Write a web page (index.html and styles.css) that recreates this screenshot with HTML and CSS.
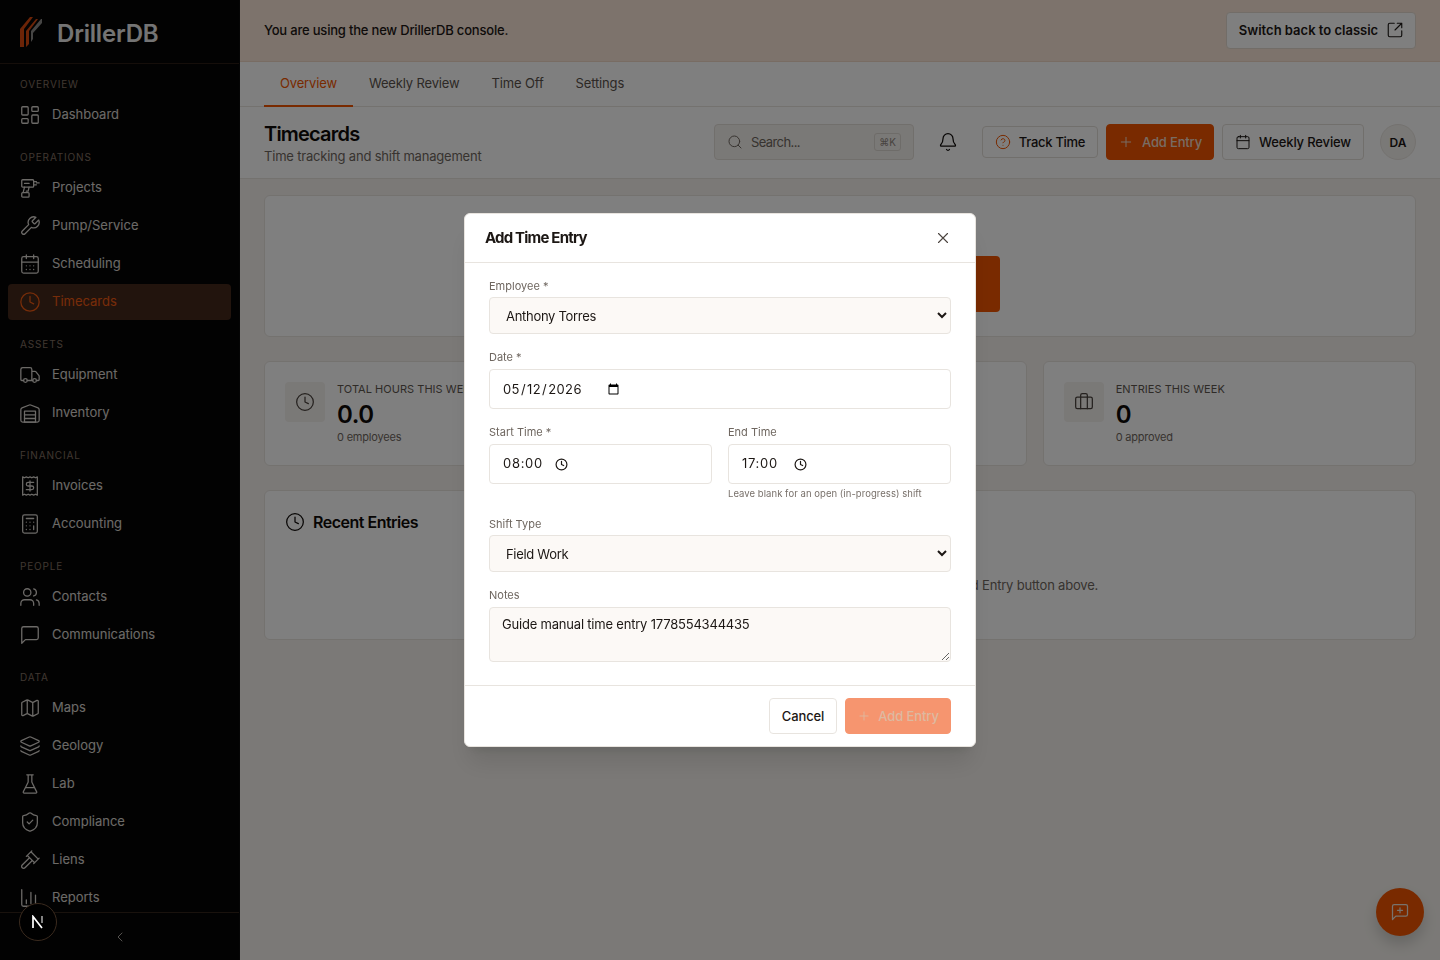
FILE: index.html
```html
<!DOCTYPE html>
<html lang="en-GB">
<head>
<meta charset="utf-8">
<title>DrillerDB – Timecards</title>
<link rel="stylesheet" href="styles.css">
</head>
<body>
<svg class="defs" width="0" height="0" aria-hidden="true">
  <symbol id="i-dash" viewBox="0 0 24 24"><rect x="3" y="3" width="7" height="9" rx="1"/><rect x="14" y="3" width="7" height="5" rx="1"/><rect x="14" y="12" width="7" height="9" rx="1"/><rect x="3" y="16" width="7" height="5" rx="1"/></symbol>
  <symbol id="i-drill" viewBox="0 0 24 24"><path d="M4 3h11a1 1 0 0 1 1 1v6a1 1 0 0 1-1 1H4a1 1 0 0 1-1-1V4a1 1 0 0 1 1-1z"/><path d="M16 5h3M19 6.500h3M16 8.500h3"/><path d="M6 11l-1.500 6M11 11l-1 4.500H8M6 7h5"/><path d="M4 17h6a1 1 0 0 1 1 1v3a1 1 0 0 1-1 1H4a1 1 0 0 1-1-1v-3a1 1 0 0 1 1-1z"/></symbol>
  <symbol id="i-wrench" viewBox="0 0 24 24"><path d="M14.7 6.300a1 1 0 0 0 0 1.400l1.600 1.600a1 1 0 0 0 1.400 0l3.770-3.770a6 6 0 0 1-7.940 7.940l-6.910 6.910a2.120 2.120 0 0 1-3-3l6.910-6.910a6 6 0 0 1 7.940-7.940l-3.760 3.760z"/></symbol>
  <symbol id="i-cal-days" viewBox="0 0 24 24"><path d="M8 2v4M16 2v4"/><rect x="3" y="4" width="18" height="18" rx="2"/><path d="M3 10h18M8 14h.01M12 14h.01M16 14h.01M8 18h.01M12 18h.01M16 18h.01"/></symbol>
  <symbol id="i-clock" viewBox="0 0 24 24"><circle cx="12" cy="12" r="10"/><path d="M12 6v6l4 2"/></symbol>
  <symbol id="i-truck" viewBox="0 0 24 24"><path d="M14 18V6a2 2 0 0 0-2-2H4a2 2 0 0 0-2 2v11a1 1 0 0 0 1 1h2M15 18H9M19 18h2a1 1 0 0 0 1-1v-3.650a1 1 0 0 0-.22-.624l-3.480-4.350A1 1 0 0 0 17.520 8H14"/><circle cx="17" cy="18" r="2"/><circle cx="7" cy="18" r="2"/></symbol>
  <symbol id="i-warehouse" viewBox="0 0 24 24"><path d="M22 8.350V20a2 2 0 0 1-2 2H4a2 2 0 0 1-2-2V8.350A2 2 0 0 1 3.260 6.500l8-3.200a2 2 0 0 1 1.480 0l8 3.200A2 2 0 0 1 22 8.350Z"/><path d="M6 18h12M6 14h12"/><rect x="6" y="10" width="12" height="12"/></symbol>
  <symbol id="i-receipt" viewBox="0 0 24 24"><path d="M4 2v20l2-1 2 1 2-1 2 1 2-1 2 1 2-1 2 1V2l-2 1-2-1-2 1-2-1-2 1-2-1-2 1Z"/><path d="M16 8h-6a2 2 0 1 0 0 4h4a2 2 0 1 1 0 4H8M12 17.500v-11"/></symbol>
  <symbol id="i-calc" viewBox="0 0 24 24"><rect x="4" y="2" width="16" height="20" rx="2"/><path d="M8 6h8M16 14v4M16 10h.01M12 10h.01M8 10h.01M12 14h.01M8 14h.01M12 18h.01M8 18h.01"/></symbol>
  <symbol id="i-users" viewBox="0 0 24 24"><path d="M16 21v-2a4 4 0 0 0-4-4H6a4 4 0 0 0-4 4v2"/><circle cx="9" cy="7" r="4"/><path d="M22 21v-2a4 4 0 0 0-3-3.870M16 3.130a4 4 0 0 1 0 7.750"/></symbol>
  <symbol id="i-msg" viewBox="0 0 24 24"><path d="M21 15a2 2 0 0 1-2 2H7l-4 4V5a2 2 0 0 1 2-2h14a2 2 0 0 1 2 2z"/></symbol>
  <symbol id="i-map" viewBox="0 0 24 24"><path d="M14.106 5.553a2 2 0 0 0 1.788 0l3.659-1.830A1 1 0 0 1 21 4.619v12.764a1 1 0 0 1-.553.894l-4.553 2.277a2 2 0 0 1-1.788 0l-4.212-2.106a2 2 0 0 0-1.788 0l-3.659 1.830A1 1 0 0 1 3 19.381V6.618a1 1 0 0 1 .553-.894l4.553-2.277a2 2 0 0 1 1.788 0zM15 5.764v15M9 3.236v15"/></symbol>
  <symbol id="i-layers" viewBox="0 0 24 24"><path d="M12.830 2.180a2 2 0 0 0-1.660 0L2.600 6.080a1 1 0 0 0 0 1.830l8.580 3.910a2 2 0 0 0 1.660 0l8.580-3.900a1 1 0 0 0 0-1.830Z"/><path d="M2 12a1 1 0 0 0 .58.910l8.600 3.910a2 2 0 0 0 1.650 0l8.580-3.900A1 1 0 0 0 22 12"/><path d="M2 17a1 1 0 0 0 .58.910l8.600 3.910a2 2 0 0 0 1.650 0l8.580-3.900A1 1 0 0 0 22 17"/></symbol>
  <symbol id="i-flask" viewBox="0 0 24 24"><path d="M10 2v7.527a2 2 0 0 1-.211.896L4.720 20.550a1 1 0 0 0 .9 1.450h12.760a1 1 0 0 0 .9-1.450l-5.069-10.127A2 2 0 0 1 14 9.527V2M8.500 2h7M7 16h10"/></symbol>
  <symbol id="i-shield" viewBox="0 0 24 24"><path d="M20 13c0 5-3.500 7.500-7.660 8.950a1 1 0 0 1-.67-.01C7.500 20.500 4 18 4 13V6a1 1 0 0 1 1-1c2 0 4.500-1.200 6.240-2.720a1.170 1.170 0 0 1 1.520 0C14.510 3.810 17 5 19 5a1 1 0 0 1 1 1z"/><path d="m9 12 2 2 4-4"/></symbol>
  <symbol id="i-gavel" viewBox="0 0 24 24"><path d="m14.500 12.500-8 8a2.119 2.119 0 1 1-3-3l8-8M16 16l6-6M8 8l6-6M9 7l8 8M21 11l-8-8"/></symbol>
  <symbol id="i-chart" viewBox="0 0 24 24"><path d="M3 3v16a2 2 0 0 0 2 2h16M8 18v-4M13 18V6M18 18V9"/></symbol>
  <symbol id="i-chev" viewBox="0 0 24 24"><path d="m15 18-6-6 6-6"/></symbol>
  <symbol id="i-ext" viewBox="0 0 24 24"><path d="M21 13v6a2 2 0 0 1-2 2H5a2 2 0 0 1-2-2V5a2 2 0 0 1 2-2h6M21 3l-9 9M15 3h6v6"/></symbol>
  <symbol id="i-search" viewBox="0 0 24 24"><path d="m21 21-4.300-4.300"/><circle cx="11" cy="11" r="8"/></symbol>
  <symbol id="i-bell" viewBox="0 0 24 24"><path d="M10.268 21a2 2 0 0 0 3.464 0M3.262 15.326A1 1 0 0 0 4 17h16a1 1 0 0 0 .74-1.673C19.410 13.956 18 12.499 18 8A6 6 0 0 0 6 8c0 4.499-1.411 5.956-2.738 7.326"/></symbol>
  <symbol id="i-help" viewBox="0 0 24 24"><circle cx="12" cy="12" r="10"/><path d="M9.090 9a3 3 0 0 1 5.830 1c0 2-3 3-3 3M12 17h.01"/></symbol>
  <symbol id="i-plus" viewBox="0 0 24 24"><path d="M5 12h14M12 5v14"/></symbol>
  <symbol id="i-cal" viewBox="0 0 24 24"><path d="M8 2v4M16 2v4"/><rect x="3" y="4" width="18" height="18" rx="2"/><path d="M3 10h18"/></symbol>
  <symbol id="i-brief" viewBox="0 0 24 24"><path d="M16 20V4a2 2 0 0 0-2-2h-4a2 2 0 0 0-2 2v16"/><rect x="2" y="6" width="20" height="14" rx="2"/></symbol>
  <symbol id="i-x" viewBox="0 0 24 24"><path d="M18 6 6 18M6 6l12 12"/></symbol>
  <symbol id="i-msg-plus" viewBox="0 0 24 24"><path d="M21 15a2 2 0 0 1-2 2H7l-4 4V5a2 2 0 0 1 2-2h14a2 2 0 0 1 2 2z"/><path d="M12 7v6M9 10h6"/></symbol>
</svg>

<div class="app">
  <aside class="sidebar">
    <div class="brand">
      <svg class="brand-mark" viewBox="0 0 22 30" aria-hidden="true">
        <path class="mark-o" d="M0 12 10 0h3L4 12v18H0z"/>
        <path class="mark-o" d="M6 14 16 2h2L9 14v13l-3 3z"/>
        <path class="mark-g" d="M11 14 21 2h1v4l-9 10v6l-2 3z"/>
      </svg>
      <span class="brand-name">DrillerDB</span>
    </div>
    <nav class="nav">
      <div class="nav-label">Overview</div>
      <a class="nav-item"><svg class="nav-ico"><use href="#i-dash"/></svg>Dashboard</a>
      <div class="nav-label">Operations</div>
      <a class="nav-item"><svg class="nav-ico"><use href="#i-drill"/></svg>Projects</a>
      <a class="nav-item"><svg class="nav-ico"><use href="#i-wrench"/></svg>Pump/Service</a>
      <a class="nav-item"><svg class="nav-ico"><use href="#i-cal-days"/></svg>Scheduling</a>
      <a class="nav-item active"><svg class="nav-ico"><use href="#i-clock"/></svg>Timecards</a>
      <div class="nav-label">Assets</div>
      <a class="nav-item"><svg class="nav-ico"><use href="#i-truck"/></svg>Equipment</a>
      <a class="nav-item"><svg class="nav-ico"><use href="#i-warehouse"/></svg>Inventory</a>
      <div class="nav-label">Financial</div>
      <a class="nav-item"><svg class="nav-ico"><use href="#i-receipt"/></svg>Invoices</a>
      <a class="nav-item"><svg class="nav-ico"><use href="#i-calc"/></svg>Accounting</a>
      <div class="nav-label">People</div>
      <a class="nav-item"><svg class="nav-ico"><use href="#i-users"/></svg>Contacts</a>
      <a class="nav-item"><svg class="nav-ico"><use href="#i-msg"/></svg>Communications</a>
      <div class="nav-label">Data</div>
      <a class="nav-item"><svg class="nav-ico"><use href="#i-map"/></svg>Maps</a>
      <a class="nav-item"><svg class="nav-ico"><use href="#i-layers"/></svg>Geology</a>
      <a class="nav-item"><svg class="nav-ico"><use href="#i-flask"/></svg>Lab</a>
      <a class="nav-item"><svg class="nav-ico"><use href="#i-shield"/></svg>Compliance</a>
      <a class="nav-item"><svg class="nav-ico"><use href="#i-gavel"/></svg>Liens</a>
      <a class="nav-item"><svg class="nav-ico"><use href="#i-chart"/></svg>Reports</a>
    </nav>
    <div class="side-foot"><svg class="ico16"><use href="#i-chev"/></svg></div>
  </aside>

  <main class="main">
    <div class="banner">
      <span>You are using the new DrillerDB console.</span>
      <button class="btn-switch">Switch back to classic <svg class="ico18"><use href="#i-ext"/></svg></button>
    </div>
    <div class="tabs">
      <a class="tab on">Overview</a>
      <a class="tab">Weekly Review</a>
      <a class="tab">Time Off</a>
      <a class="tab">Settings</a>
    </div>
    <header class="page-head">
      <div class="titles">
        <h1>Timecards</h1>
        <p>Time tracking and shift management</p>
      </div>
      <div class="actions">
        <div class="search"><svg class="ico16"><use href="#i-search"/></svg><span class="search-text">Search...</span><kbd>⌘K</kbd></div>
        <button class="bell"><svg class="ico20"><use href="#i-bell"/></svg></button>
        <button class="btn btn-track"><svg class="ico16 orange"><use href="#i-help"/></svg>Track Time</button>
        <button class="btn btn-primary"><svg class="ico16"><use href="#i-plus"/></svg>Add Entry</button>
        <button class="btn btn-weekly"><svg class="ico16"><use href="#i-cal"/></svg>Weekly Review</button>
        <div class="avatar">DA</div>
      </div>
    </header>
    <div class="content">
      <section class="card hero"><div class="hero-btn"></div></section>
      <div class="stats">
        <section class="card stat">
          <div class="stat-ico"><svg class="ico20"><use href="#i-clock"/></svg></div>
          <div><div class="stat-label">Total hours this week</div><div class="stat-value">0.0</div><div class="stat-sub">0 employees</div></div>
        </section>
        <section class="card stat">
          <div class="stat-ico"><svg class="ico20"><use href="#i-clock"/></svg></div>
          <div><div class="stat-label">Overtime this week</div><div class="stat-value">0.0</div><div class="stat-sub">0 hours</div></div>
        </section>
        <section class="card stat">
          <div class="stat-ico"><svg class="ico20"><use href="#i-brief"/></svg></div>
          <div><div class="stat-label">Entries this week</div><div class="stat-value">0</div><div class="stat-sub">0 approved</div></div>
        </section>
      </div>
      <section class="card recent">
        <h2><svg class="ico20"><use href="#i-clock"/></svg>Recent Entries</h2>
        <p class="empty">No time entries yet. Start tracking time or log an entry with the Add Entry button above.</p>
      </section>
    </div>
  </main>
</div>

<button class="fab"><svg class="ico20"><use href="#i-msg-plus"/></svg></button>

<div class="overlay">
  <form class="modal">
    <div class="modal-head">
      <h3>Add Time Entry</h3>
      <svg class="ico18 close"><use href="#i-x"/></svg>
    </div>
    <div class="modal-body">
      <div class="field">
        <label>Employee *</label>
        <select class="select"><option>Anthony Torres</option></select>
      </div>
      <div class="field">
        <label>Date *</label>
        <input class="input date" type="date" value="2026-05-12">
      </div>
      <div class="row">
        <div>
          <label>Start Time *</label>
          <div class="input time"><input class="time-val" type="text" value="08:00"><svg class="time-ico"><use href="#i-clock"/></svg></div>
        </div>
        <div>
          <label>End Time</label>
          <div class="input time"><input class="time-val" type="text" value="17:00"><svg class="time-ico"><use href="#i-clock"/></svg></div>
          <div class="hint">Leave blank for an open (in-progress) shift</div>
        </div>
      </div>
      <div class="field">
        <label>Shift Type</label>
        <select class="select"><option>Field Work</option></select>
      </div>
      <div>
        <label>Notes</label>
        <textarea class="area">Guide manual time entry 1778554344435</textarea>
      </div>
    </div>
    <div class="modal-foot">
      <button type="button" class="m-btn m-cancel">Cancel</button>
      <button type="button" class="m-btn m-add"><svg class="ico14"><use href="#i-plus"/></svg>Add Entry</button>
    </div>
  </form>
</div>

<div class="dev-badge" aria-label="Next.js">
  <svg class="n-logo" viewBox="0 0 14 14"><path d="M2 13V1.500L11 13"/><path class="n-right" d="M11 1v7"/></svg>
</div>
</body>
</html>
```
FILE: styles.css
```css
* { box-sizing: border-box; }
html, body { height: 100%; }
body {
  margin: 0;
  overflow: hidden;
  font-family: Inter, "Liberation Sans", sans-serif;
  font-size: 13px;
  color: #1c1714;
  background: #f6f3ee;
}
.defs { position: absolute; }
svg { fill: none; stroke: currentColor; stroke-width: 1.5; stroke-linecap: round; stroke-linejoin: round; flex: none; }
.ico20 { width: 20px; height: 20px; }
.ico18 { width: 18px; height: 18px; }
.ico16 { width: 16px; height: 16px; }
.ico14 { width: 14px; height: 14px; }
.orange { color: #f25500; }

.app { display: flex; height: 960px; }

/* sidebar */
.sidebar { width: 240px; flex: none; height: 960px; background: #050505; border-right: 1px solid #0a0a0a; display: flex; flex-direction: column; }
.brand { height: 64px; flex: none; display: flex; align-items: center; gap: 14px; padding: 3px 0 0 20px; border-bottom: 1px solid #2a1d15; }
.brand-mark { width: 22px; height: 30px; margin-top: -3px; stroke: none; }
.mark-o { fill: #d9480f; }
.mark-g { fill: #8d8a88; }
.brand-name { font-size: 24px; font-weight: 600; color: #e9e9e9; letter-spacing: -0.2px; margin-left: 1px; }
.nav { flex: 1; min-height: 0; overflow: hidden; padding: 12px 8px 0; display: flex; flex-direction: column; }
.nav-label { height: 16px; line-height: 16px; margin: 0 0 5px; padding-left: 12px; font-size: 10px; letter-spacing: .85px; text-transform: uppercase; color: #806f62; }
.nav-item + .nav-label { margin-top: 16px; }
.nav-item { height: 36px; flex: none; display: flex; align-items: center; gap: 11px; padding: 0 0 2px 11px; border-radius: 4px; color: #f0ebe5; font-size: 13px; opacity: .9; }
.nav-item + .nav-item { margin-top: 2px; }
.nav-ico { width: 22px; height: 22px; margin-top: 2px; stroke-width: 1.4; color: #f0ebe5; }
.nav-item.active { background: #44281a; color: #ef5a12; opacity: 1; }
.nav-item.active .nav-ico { color: #ef5a12; }
.side-foot { height: 48px; flex: none; border-top: 1px solid #33241a; display: flex; align-items: center; justify-content: center; color: #aaa49f; }

/* main */
.main { flex: 1; min-width: 0; display: flex; flex-direction: column; }
.banner { height: 62px; flex: none; display: flex; align-items: center; justify-content: space-between; padding: 0 24px 1px; background: #fae6d8; border-bottom: 1px solid #f0d8c6; font-size: 13px; font-weight: 500; letter-spacing: -0.2px; }
.btn-switch { height: 37px; width: 190px; display: flex; align-items: center; justify-content: center; gap: 8px; font: 600 13px Inter, sans-serif; color: #1c1714; background: #fff; border: 1px solid #e5dbd0; border-radius: 4px; padding: 0 0 0 1px; }
.tabs { height: 45px; flex: none; display: flex; padding-left: 24px; background: #fff; border-bottom: 1px solid #e8e4df; }
.tab { display: flex; align-items: center; padding: 0 16px 1px; margin-bottom: -1px; font-size: 13px; letter-spacing: -0.15px; color: #5a524c; border-bottom: 2px solid transparent; }
.tab.on { color: #f25500; border-bottom-color: #f25500; }
.page-head { height: 72px; flex: none; display: flex; align-items: center; justify-content: space-between; padding: 0 24px; background: #fff; border-bottom: 1px solid #e8e4df; }
.titles h1 { margin: 1px 0 0; font-size: 20px; line-height: 24px; font-weight: 600; letter-spacing: -0.8px; color: #0f0b09; }
.titles p { margin: 1px 0 0; font-size: 13px; line-height: 18px; letter-spacing: -0.2px; color: #6f6760; }
.actions { display: flex; align-items: center; margin-top: -1px; }
.search { width: 200px; height: 36px; display: flex; align-items: center; gap: 8px; padding: 0 12px; background: #f5f2ee; border: 1px solid #e3ded8; border-radius: 4px; color: #6f6760; }
.search-text { flex: 1; font-size: 13px; letter-spacing: -0.6px; }
.search kbd { font: 10px Inter, sans-serif; width: 27px; height: 18px; display: flex; align-items: center; justify-content: center; border: 1px solid #ddd8d2; border-radius: 3px; color: #8f8780; }
.bell { width: 20px; height: 36px; margin: 0 24px; padding: 0; display: flex; align-items: center; background: none; border: 0; color: #0f0b09; }
.btn { height: 36px; display: flex; align-items: center; justify-content: center; gap: 8px; padding: 0; margin-right: 8px; font: 500 13px Inter, sans-serif; letter-spacing: -0.15px; color: #1c1714; background: #fff; border: 1px solid #e3ded8; border-radius: 4px; }
.btn-track { width: 116px; height: 32px; letter-spacing: -0.3px; }
.btn-primary { width: 108px; background: #f25500; border-color: #f25500; color: #f0d9c8; }
.btn-weekly { width: 142px; }
.avatar { width: 36px; height: 36px; margin-left: 8px; display: flex; align-items: center; justify-content: center; border-radius: 50%; background: #f5f2ee; border: 1px solid #e8e4df; font-size: 12px; font-weight: 600; }
.content { flex: 1; padding: 16px 24px; display: flex; flex-direction: column; gap: 24px; }
.card { background: #fff; border: 1px solid #e8e4df; border-radius: 6px; }
.hero { height: 142px; display: flex; align-items: flex-end; justify-content: center; padding-bottom: 24px; }
.hero-btn { width: 320px; height: 56px; background: #f25500; border-radius: 4px; }
.stats { display: grid; grid-template-columns: repeat(3, 1fr); gap: 16px; }
.stat { height: 105px; display: flex; gap: 12px; padding: 20px; overflow: hidden; }
.stat-ico { width: 40px; height: 40px; flex: none; display: flex; align-items: center; justify-content: center; background: #f5f2ee; border-radius: 4px; color: #4a433e; }
.stat-label { font-size: 11px; line-height: 14px; text-transform: uppercase; letter-spacing: .03px; color: #5e564f; white-space: nowrap; }
.stat-value { font-size: 24px; line-height: 30px; margin-top: 4px; font-weight: 600; letter-spacing: -0.4px; color: #0f0b09; }
.stat-sub { font-size: 11px; line-height: 14px; letter-spacing: -0.2px; color: #6f6760; }
.recent { height: 150px; padding: 19px 20px 0; }
.recent h2 { margin: 0; height: 24px; display: flex; align-items: center; gap: 8px; font-size: 16px; font-weight: 600; letter-spacing: -0.5px; color: #0f0b09; }
.empty { margin: 43px 0 0; text-align: center; font-size: 13px; letter-spacing: -0.2px; color: #6f6760; white-space: nowrap; }
.fab { position: fixed; right: 16px; bottom: 24px; width: 48px; height: 48px; display: flex; align-items: center; justify-content: center; border-radius: 50%; border: 0; background: #f25500; color: #f0e6dc; box-shadow: 0 8px 14px rgba(0, 0, 0, .16); }

/* modal */
.overlay { position: fixed; inset: 0; background: rgba(0, 0, 0, .5); display: flex; align-items: center; justify-content: center; }
.modal { width: 512px; height: 534px; background: #fff; border: 1px solid #e8e4df; border-radius: 6px; box-shadow: 0 20px 25px -5px rgba(0, 0, 0, .1), 0 8px 10px -6px rgba(0, 0, 0, .1); }
.modal-head { height: 49px; display: flex; align-items: center; justify-content: space-between; padding: 0 23px 1px 20px; border-bottom: 1px solid #e8e4df; }
.modal-head h3 { margin: 0; font-size: 15px; font-weight: 700; letter-spacing: -0.8px; color: #1c1714; }
.close { color: #4a433e; }
.modal-body { padding: 15px 24px 23px; border-bottom: 1px solid #e8e4df; }
.modal-body label { display: block; height: 16px; line-height: 16px; margin-bottom: 4px; font-size: 11px; color: #6f6760; }
.field { margin-bottom: 15px; }
.row { display: grid; grid-template-columns: 1fr 1fr; gap: 16px; margin-bottom: 15px; }
.select { display: block; width: 100%; height: 37px; margin-top: -1px; padding: 0 4px 0 12px; font: 13px Inter, sans-serif; letter-spacing: -0.3px; color: #1c1714; background: #fcf9f6; border: 1px solid #e8e4df; border-radius: 4px; }
.input { display: block; width: 100%; height: 40px; padding: 0 12px; font: 13px Inter, sans-serif; letter-spacing: .4px; color: #1c1714; background: #fff; border: 1px solid #e8e4df; border-radius: 4px; }
.date::-webkit-datetime-edit { flex: none; }
.date::-webkit-calendar-picker-indicator { margin-left: -3px; }
.time { display: flex; align-items: center; padding-left: 13px; }
.time-val { width: 52px; height: 20px; padding: 0 0 3px; border: 0; outline: 0; background: none; font: inherit; letter-spacing: .7px; color: inherit; }
.time-ico { width: 13px; height: 13px; margin-top: 1px; stroke-width: 2.2; color: #1c1714; }
.hint { margin-top: 3px; height: 14px; line-height: 14px; font-size: 9.500px; letter-spacing: .05px; color: #78706a; white-space: nowrap; }
.area { display: block; width: 100%; height: 55px; padding: 8px 12px; font: 13px Inter, sans-serif; letter-spacing: -0.2px; color: #1c1714; background: #fcf9f6; border: 1px solid #e8e4df; border-radius: 4px; }
.modal-foot { height: 60px; display: flex; align-items: center; justify-content: flex-end; gap: 8px; padding: 0 24px; }
.m-btn { height: 36px; display: flex; align-items: center; justify-content: center; padding: 0; font: 500 13px Inter, sans-serif; letter-spacing: -0.1px; color: #1c1714; background: #fff; border: 1px solid #e8e4df; border-radius: 4px; }
.m-cancel { width: 68px; }
.m-add { width: 106px; gap: 7px; background: #f6956f; border-color: #f6956f; color: #ddb9a0; }

.dev-badge { position: fixed; left: 19px; top: 903px; width: 38px; height: 38px; display: flex; align-items: center; justify-content: center; border-radius: 50%; background: #000; border: 1px solid #3a2a1e; color: #fff; }
.n-logo { width: 14px; height: 14px; stroke-width: 1.7; stroke-linecap: butt; stroke-linejoin: miter; }
.n-right { opacity: .6; }
```
